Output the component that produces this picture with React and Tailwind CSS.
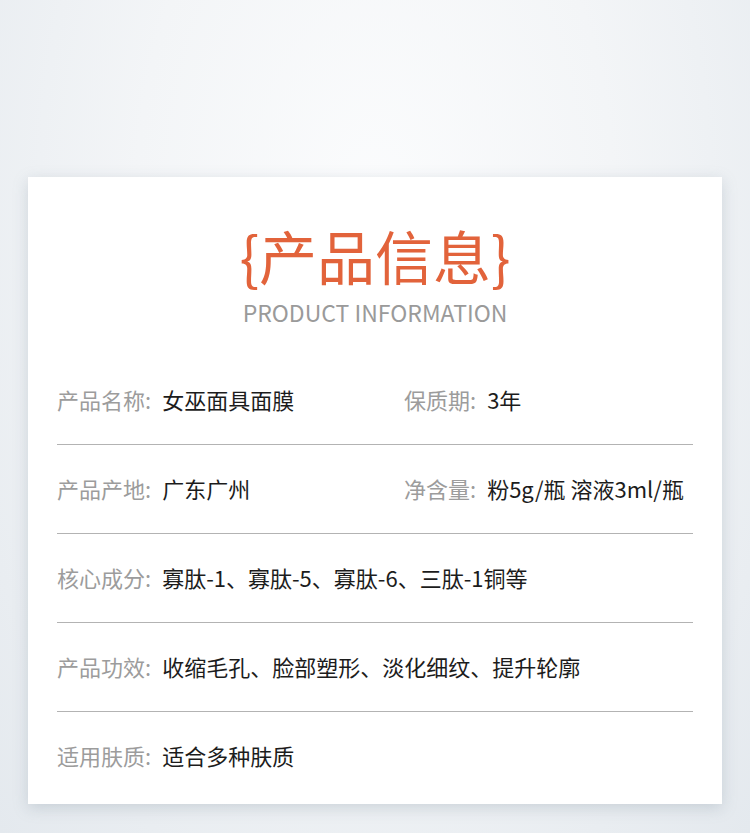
const rows = [
  [
    { label: '产品名称', value: '女巫面具面膜' },
    { label: '保质期', value: '3年' },
  ],
  [
    { label: '产品产地', value: '广东广州' },
    { label: '净含量', value: '粉5g/瓶 溶液3ml/瓶' },
  ],
  [{ label: '核心成分', value: '寡肽-1、寡肽-5、寡肽-6、三肽-1铜等' }],
  [{ label: '产品功效', value: '收缩毛孔、脸部塑形、淡化细纹、提升轮廓' }],
  [{ label: '适用肤质', value: '适合多种肤质' }],
];

const Field = ({ label, value }) => (
  <div className="flex items-center whitespace-nowrap text-[22px] leading-none pb-[3px]">
    <span className="text-[#9c9c9c]">{label}:</span>
    <span className="ml-[11px] text-[#1c1c1c]">{value}</span>
  </div>
);

const App = () => {
  return (
    <div
      className="w-[750px] h-[833px] overflow-hidden pt-[177px] bg-[radial-gradient(ellipse_at_50%_25%,#fbfcfd_0%,#f3f5f7_45%,#e4e9ee_100%)]"
      style={{ fontFamily: '"Noto Sans CJK SC", "Noto Sans", sans-serif' }}
    >
      <div className="mx-auto w-[694px] h-[627px] bg-white shadow-[0_4px_14px_rgba(120,135,150,0.28)] px-[29px] pt-[49px] flex flex-col">
        <h1 className="text-center text-[58px] leading-none text-[#e2633b] font-normal">{'{产品信息}'}</h1>
        <p className="mt-[17px] text-center text-[23px] leading-none text-[#9a9a9a]">
          PRODUCT INFORMATION
        </p>

        <div className="mt-[32px] flex flex-col">
          {rows.map((row, i) => (
            <div
              key={i}
              className={`h-[89px] grid grid-cols-[347px_1fr] items-center ${
                i < rows.length - 1 ? 'border-b-[1.5px] border-[#b3b3b3]' : ''
              }`}
            >
              {row.map((f) => (
                <Field key={f.label} label={f.label} value={f.value} />
              ))}
            </div>
          ))}
        </div>
      </div>
    </div>
  );
};

export default App;
